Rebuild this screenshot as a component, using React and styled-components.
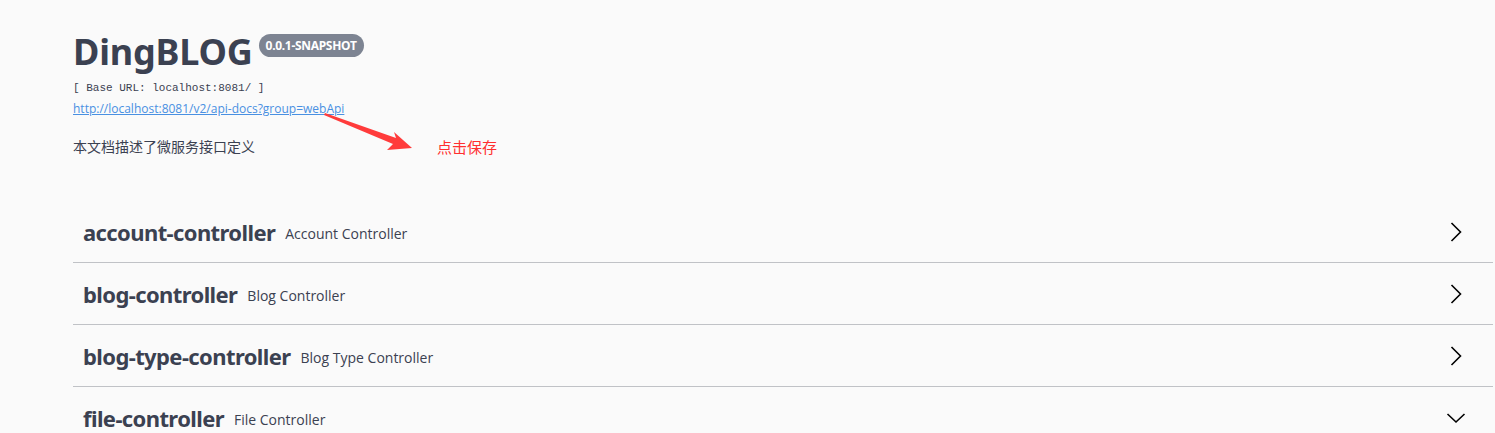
import React from "react";
import styled, { createGlobalStyle } from "styled-components";

const Global = createGlobalStyle`
  body {
    margin: 0;
    background: #fafafa;
    font-family: "Open Sans", "Noto Sans CJK SC", sans-serif;
    color: #3b4151;
  }
`;

const Page = styled.div`
  padding: 0 2px 0 73px;
`;

const Info = styled.div`
  position: relative;
  padding-top: 27px;
  margin-bottom: 44px;
`;

const TitleRow = styled.div`
  display: flex;
  align-items: flex-start;
  gap: 6px;
`;

const Title = styled.h2`
  margin: 0;
  font-family: "Noto Sans", sans-serif;
  font-weight: 700;
  font-size: 36px;
  line-height: 50px;
  letter-spacing: -0.2px;
  color: #3b4151;
`;

const Badge = styled.span`
  margin-top: 7px;
  background: #7d8492;
  color: #fff;
  border-radius: 12px;
  padding: 4px 7px 4px;
  font-family: "Noto Sans", sans-serif;
  font-weight: 700;
  font-size: 12px;
  line-height: 15px;
  letter-spacing: -0.3px;
`;

const BaseUrl = styled.pre`
  margin: 3px 0 0;
  font-family: "Liberation Mono", monospace;
  font-size: 11px;
  line-height: 16px;
  color: #3b4151;
`;

const Link = styled.a`
  display: inline-block;
  margin-top: -1px;
  font-size: 12px;
  line-height: 16px;
  color: #4990e2;
  text-decoration: underline;
`;

const Desc = styled.div`
  display: flex;
  align-items: center;
  margin-top: 19px;
  font-size: 14px;
  line-height: 20px;
  color: #3b4151;
`;

const Note = styled.span`
  margin-left: 182px;
  color: #ff2f2f;
  font-size: 15px;
`;

const Arrow = styled.svg`
  position: absolute;
  left: 249px;
  top: 108px;
`;

const Tag = styled.div`
  display: flex;
  align-items: center;
  height: 61px;
  padding: 0 27px 0 10px;
  border-bottom: 1px solid rgba(59, 65, 81, 0.3);
`;

const TagName = styled.span`
  font-family: "Noto Sans", sans-serif;
  font-weight: 700;
  font-size: 22px;
  letter-spacing: -0.6px;
  color: #3b4151;
`;

const TagDesc = styled.small`
  margin-left: 10px;
  font-size: 14px;
  color: #3b4151;
  flex: 1;
  padding-top: 3px;
`;

const Chevron = ({ open }) => (
  <svg width="20" height="20" viewBox="0 0 20 20">
    <path
      d={open ? "M1.5 6l8.5 8 8.5-8" : "M5.5 1l9 9-9 9"}
      fill="none"
      stroke="#000"
      strokeWidth="1.6"
    />
  </svg>
);

const tags = [
  ["account-controller", "Account Controller"],
  ["blog-controller", "Blog Controller"],
  ["blog-type-controller", "Blog Type Controller"],
  ["file-controller", "File Controller", true],
];

export default function App() {
  return (
    <Page>
      <Global />
      <Info>
        <TitleRow>
          <Title>DingBLOG</Title>
          <Badge>0.0.1-SNAPSHOT</Badge>
        </TitleRow>
        <BaseUrl>[ Base URL: localhost:8081/ ]</BaseUrl>
        <Link href="#">http://localhost:8081/v2/api-docs?group=webApi</Link>
        <Desc>
          本文档描述了微服务接口定义
          <Note>点击保存</Note>
        </Desc>
        <Arrow width="100" height="50" viewBox="0 0 100 50">
          <path d="M3 5 L74 30 L72 24 L90 40 L65 42 L71 36 L2 7 Z" fill="#ff3b3b" />
        </Arrow>
      </Info>
      {tags.map(([name, desc, open]) => (
        <Tag key={name}>
          <TagName>{name}</TagName>
          <TagDesc>{desc}</TagDesc>
          <Chevron open={open} />
        </Tag>
      ))}
    </Page>
  );
}
